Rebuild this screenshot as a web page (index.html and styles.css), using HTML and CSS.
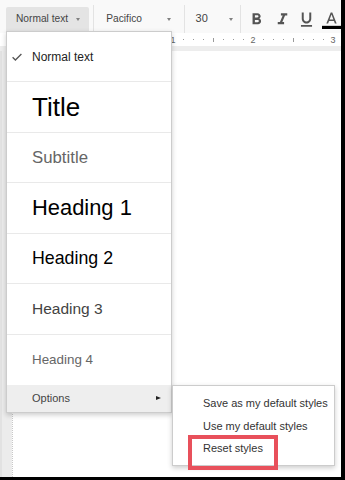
FILE: index.html
```html
<!DOCTYPE html>
<html>
<head>
<meta charset="utf-8">
<link rel="stylesheet" href="styles.css">
</head>
<body>
<div class="screen">
  <div class="toolbar">
    <div class="tb-btn tb-style"><span>Normal text</span><span class="caret"></span></div>
    <div class="sep"></div>
    <div class="tb-btn tb-font"><span>Pacifico</span><span class="caret"></span></div>
    <div class="sep"></div>
    <div class="tb-btn tb-size"><span>30</span><span class="caret"></span></div>
    <div class="sep"></div>
    <svg class="icon i-bold" viewBox="0 0 24 24"><path d="M15.6 10.79c.97-.67 1.65-1.770 1.65-2.79 0-2.26-1.75-4-4-4H7v14h7.04c2.09 0 3.71-1.7 3.71-3.79 0-1.52-.86-2.82-2.15-3.42zM10 6.5h3c.83 0 1.5.67 1.5 1.5s-.67 1.5-1.5 1.5h-3v-3zm3.5 9H10v-3h3.5c.83 0 1.5.67 1.5 1.5s-.67 1.5-1.5 1.5z"/></svg>
    <svg class="icon i-italic" viewBox="0 0 24 24"><path d="M10 4v3h2.21l-3.42 8H6v3h8v-3h-2.21l3.42-8H18V4z"/></svg>
    <svg class="icon i-under" viewBox="0 0 24 24"><path d="M12 17c3.31 0 6-2.69 6-6V3h-2.5v8c0 1.93-1.570 3.5-3.5 3.5S8.5 12.93 8.5 11V3H6v8c0 3.31 2.69 6 6 6zm-7 2v2h14v-2H5z"/></svg>
    <svg class="icon i-color" viewBox="0 0 24 24"><path d="M11 3L5.5 17h2.25l1.12-3h6.25l1.12 3h2.25L13 3h-2zm-1.38 9L12 5.67 14.38 12H9.62z"/><rect x="0" y="20" width="24" height="4" fill="#000"/></svg>
  </div>
  <div class="ruler">
    <span class="cell"><i class="dot"></i></span><span class="cell"><i class="dot"></i></span><span class="cell"><i class="dot"></i></span><span class="cell"><i class="tick"></i></span><span class="cell"><i class="dot"></i></span><span class="cell"><i class="dot"></i></span><span class="cell"><i class="dot"></i></span><span class="cell"><i class="dot"></i></span>
    <span class="cell"><i class="dot"></i></span><span class="cell"><i class="dot"></i></span><span class="cell"><i class="dot"></i></span><span class="cell"><i class="tick"></i></span><span class="cell"><i class="dot"></i></span><span class="cell"><i class="dot"></i></span><span class="cell"><i class="dot"></i></span><span class="cell"><i class="dot"></i></span>
    <span class="cell num">1</span><span class="cell"><i class="dot"></i></span><span class="cell"><i class="dot"></i></span><span class="cell"><i class="dot"></i></span><span class="cell"><i class="tick"></i></span><span class="cell"><i class="dot"></i></span><span class="cell"><i class="dot"></i></span><span class="cell"><i class="dot"></i></span>
    <span class="cell num">2</span><span class="cell"><i class="dot"></i></span><span class="cell"><i class="dot"></i></span><span class="cell"><i class="dot"></i></span><span class="cell"><i class="tick"></i></span><span class="cell"><i class="dot"></i></span><span class="cell"><i class="dot"></i></span><span class="cell"><i class="dot"></i></span>
    <span class="cell num">3</span>
  </div>
  <div class="band"></div>
  <div class="workspace">
    <div class="gutter"></div>
    <div class="page"></div>
  </div>

  <div class="menu">
    <div class="item i-normal"><span class="mark"><svg class="check" viewBox="0 0 10 8"><path d="M0.6 4.2 L3.4 7 L9.4 1" fill="none" stroke="#555" stroke-width="1.3"/></svg></span><span>Normal text</span></div>
    <div class="item i-title"><span class="mark"></span><span>Title</span></div>
    <div class="item i-subtitle"><span class="mark"></span><span>Subtitle</span></div>
    <div class="item i-h1"><span class="mark"></span><span>Heading 1</span></div>
    <div class="item i-h2"><span class="mark"></span><span>Heading 2</span></div>
    <div class="item i-h3"><span class="mark"></span><span>Heading 3</span></div>
    <div class="item i-h4"><span class="mark"></span><span>Heading 4</span></div>
    <div class="options"><span class="mark"></span><span class="opt-label">Options</span><span class="arrow"></span></div>
  </div>

  <div class="submenu">
    <div class="sub-item">Save as my default styles</div>
    <div class="sub-item">Use my default styles</div>
    <div class="sub-item">Reset styles</div>
  </div>

  <div class="highlight"></div>
</div>
</body>
</html>
```

FILE: styles.css
```css
* { box-sizing: border-box; }

html, body {
  margin: 0;
  padding: 0;
  background: #fff;
}

body {
  font-family: "Liberation Sans", Arial, sans-serif;
  color: #222;
}

.screen {
  position: relative;
  width: 345px;
  height: 480px;
  overflow: hidden;
  display: flex;
  flex-direction: column;
  border-right: 4px solid #000;
  border-bottom: 3px solid #000;
  background: #fff;
}

/* toolbar */
.toolbar {
  height: 33px;
  flex: none;
  display: flex;
  align-items: stretch;
  padding-top: 5px;
  background: #f9f9f9;
}

.tb-btn {
  align-self: flex-start;
  margin-top: 2px;
  height: 22px;
  display: flex;
  align-items: center;
  justify-content: space-between;
  font-size: 10.2px;
  color: #444;
}

.tb-style {
  margin-left: 6px;
  width: 86px;
  height: 26px;
  padding: 0 9px 4px 10px;
  background: #e4e4e4;
  border-radius: 2px 2px 0 0;
  margin-right: 4px;
}

.tb-font {
  width: 92px;
  padding: 0 13px 0 12px;
}

.tb-size {
  width: 57px;
  padding: 0 7px 0 11px;
  font-size: 11px;
}

.caret {
  width: 0;
  height: 0;
  border-left: 2.5px solid transparent;
  border-right: 2.5px solid transparent;
  border-top: 3px solid #808080;
  margin-top: 2px;
}

.sep {
  width: 1px;
  background: #e3e3e3;
  flex: none;
}

.icon {
  flex: none;
  width: 19px;
  height: 19px;
  align-self: flex-start;
  margin-top: 5px;
  fill: #555;
}

.i-bold { margin-left: 6px; }
.i-italic { margin-left: 7px; }
.i-under { margin-left: 5px; }
.i-color { margin-left: 6px; }

/* ruler */
.ruler {
  height: 13px;
  flex: none;
  display: flex;
  padding-left: 8px;
  background: #fff;
}

.cell {
  flex: none;
  width: 10px;
  display: flex;
  align-items: center;
  justify-content: center;
  font-size: 9px;
  color: #666;
}

.dot {
  width: 1px;
  height: 1px;
  background: #9a9a9a;
}

.tick {
  width: 1px;
  height: 4px;
  background: #9a9a9a;
}

.band {
  height: 5px;
  flex: none;
  background: #ededed;
}

/* document area */
.workspace {
  flex: 1;
  display: flex;
}

.gutter {
  width: 12px;
  flex: none;
  background: #ececec;
  border-left: 2px solid #e2e2e2;
}

.page {
  flex: 1;
  background: #fff;
  border-left: 1px dotted #c8c8c8;
}

/* style menu */
.menu {
  position: absolute;
  left: 6px;
  top: 31px;
  width: 166px;
  background: #fff;
  border: 1px solid rgba(0, 0, 0, 0.2);
  box-shadow: 0 2px 5px rgba(0, 0, 0, 0.2);
}

.item {
  height: 50.43px;
  display: flex;
  align-items: center;
  border-bottom: 1px solid #e9e9e9;
  color: #000;
  white-space: nowrap;
}

.item:nth-child(7) { border-bottom: none; }

.mark {
  flex: none;
  width: 25px;
  padding-left: 5px;
  display: flex;
  align-items: center;
}

.check {
  width: 10px;
  height: 8px;
}

.i-normal { font-size: 12px; color: #222; }
.i-title { font-size: 26px; }
.i-subtitle { font-size: 16.8px; color: #666; }
.i-h1 { font-size: 21.9px; }
.i-h2 { font-size: 17.8px; }
.i-h3 { font-size: 15.5px; color: #434343; }
.i-h4 { font-size: 13.4px; color: #666; }

.options {
  height: 27px;
  display: flex;
  align-items: center;
  background: #eeeeee;
  font-size: 11px;
  color: #444;
  padding-right: 10px;
}

.opt-label { flex: 1; }

.arrow {
  width: 0;
  height: 0;
  border-top: 2.5px solid transparent;
  border-bottom: 2.5px solid transparent;
  border-left: 5px solid #222;
}

/* options submenu */
.submenu {
  position: absolute;
  left: 172px;
  top: 385px;
  width: 163px;
  height: 81px;
  padding-top: 6px;
  background: #fff;
  border: 1px solid rgba(0, 0, 0, 0.2);
  box-shadow: 0 2px 5px rgba(0, 0, 0, 0.2);
}

.sub-item {
  height: 22.5px;
  display: flex;
  align-items: center;
  padding-left: 30px;
  font-size: 11px;
  color: #333;
  white-space: nowrap;
}

.highlight {
  position: absolute;
  left: 188px;
  top: 435px;
  width: 90px;
  height: 35px;
  border: 4px solid #e8505b;
}
```
